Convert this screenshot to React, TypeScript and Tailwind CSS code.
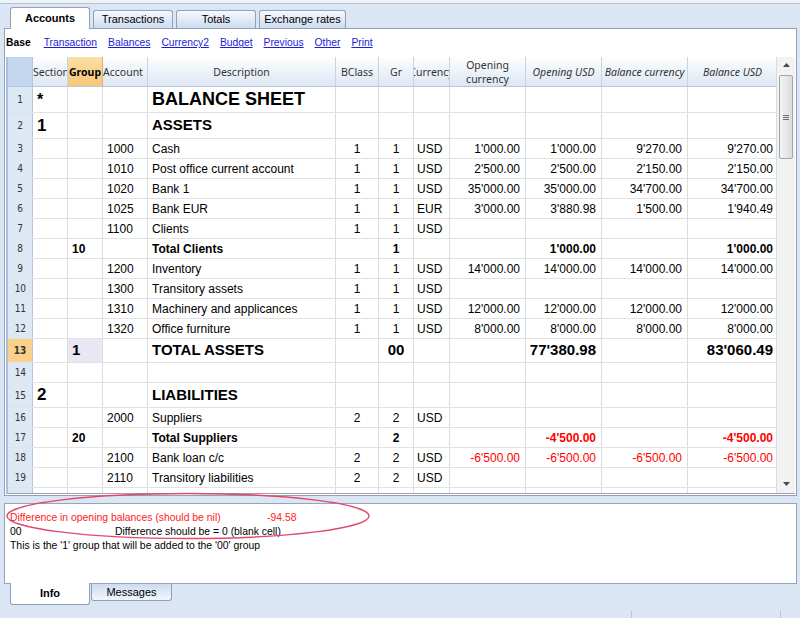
import React from "react";

type Row = {
  n: number;
  h?: string;
  kind?: "title" | "head" | "total" | "big";
  sec?: string;
  grp?: string;
  acc?: string;
  desc?: string;
  bc?: string;
  gr?: string;
  cur?: string;
  oc?: string;
  ou?: string;
  bcur?: string;
  bu?: string;
  red?: boolean;
  selected?: boolean;
  hideNum?: boolean;
};

const rows: Row[] = [
  { n: 1, h: "h-[26px]", kind: "title", sec: "*", desc: "BALANCE SHEET" },
  { n: 2, h: "h-[26px]", kind: "head", sec: "1", desc: "ASSETS" },
  { n: 3, acc: "1000", desc: "Cash", bc: "1", gr: "1", cur: "USD", oc: "1'000.00", ou: "1'000.00", bcur: "9'270.00", bu: "9'270.00" },
  { n: 4, acc: "1010", desc: "Post office current account", bc: "1", gr: "1", cur: "USD", oc: "2'500.00", ou: "2'500.00", bcur: "2'150.00", bu: "2'150.00" },
  { n: 5, acc: "1020", desc: "Bank 1", bc: "1", gr: "1", cur: "USD", oc: "35'000.00", ou: "35'000.00", bcur: "34'700.00", bu: "34'700.00" },
  { n: 6, acc: "1025", desc: "Bank EUR", bc: "1", gr: "1", cur: "EUR", oc: "3'000.00", ou: "3'880.98", bcur: "1'500.00", bu: "1'940.49" },
  { n: 7, acc: "1100", desc: "Clients", bc: "1", gr: "1", cur: "USD" },
  { n: 8, kind: "total", grp: "10", desc: "Total Clients", gr: "1", ou: "1'000.00", bu: "1'000.00" },
  { n: 9, acc: "1200", desc: "Inventory", bc: "1", gr: "1", cur: "USD", oc: "14'000.00", ou: "14'000.00", bcur: "14'000.00", bu: "14'000.00" },
  { n: 10, acc: "1300", desc: "Transitory assets", bc: "1", gr: "1", cur: "USD" },
  { n: 11, acc: "1310", desc: "Machinery and applicances", bc: "1", gr: "1", cur: "USD", oc: "12'000.00", ou: "12'000.00", bcur: "12'000.00", bu: "12'000.00" },
  { n: 12, acc: "1320", desc: "Office furniture", bc: "1", gr: "1", cur: "USD", oc: "8'000.00", ou: "8'000.00", bcur: "8'000.00", bu: "8'000.00" },
  { n: 13, h: "h-[24px]", kind: "big", grp: "1", desc: "TOTAL ASSETS", gr: "00", ou: "77'380.98", bu: "83'060.49", selected: true },
  { n: 14 },
  { n: 15, h: "h-[25px]", kind: "head", sec: "2", desc: "LIABILITIES" },
  { n: 16, acc: "2000", desc: "Suppliers", bc: "2", gr: "2", cur: "USD" },
  { n: 17, kind: "total", grp: "20", desc: "Total Suppliers", gr: "2", ou: "-4'500.00", bu: "-4'500.00", red: true },
  { n: 18, acc: "2100", desc: "Bank loan c/c", bc: "2", gr: "2", cur: "USD", oc: "-6'500.00", ou: "-6'500.00", bcur: "-6'500.00", bu: "-6'500.00", red: true },
  { n: 19, acc: "2110", desc: "Transitory liabilities", bc: "2", gr: "2", cur: "USD" },
  { n: 20, hideNum: true },
];

const cell = "shrink-0 border-r border-[#dcdcdc] overflow-hidden whitespace-nowrap flex items-center";

function GridRow({ r }: { r: Row }) {
  const h = r.h || "h-[20px]";
  // text weight/size per row kind
  const txt =
    r.kind === "title"
      ? "font-bold text-[18px]"
      : r.kind === "head" || r.kind === "big"
      ? "font-bold text-[15px]"
      : r.kind === "total"
      ? "font-bold text-[12px]"
      : "text-[12px]";
  const num = r.red ? "text-[#ff0000]" : "text-black";
  const secSize = r.kind === "title" ? "text-[16px] font-bold" : r.kind === "head" ? "text-[17px] font-bold" : "";

  return (
    <div className={`flex ${h} border-b border-[#e2e2e2] font-['Liberation_Sans',Arial,sans-serif] text-black`}>
      <div
        className={`${cell} w-[25px] justify-center text-[10px] font-['DejaVu_Sans',sans-serif] text-[#333] border-r-[#b3c6de] ${
          r.selected ? "bg-[#f9d18a] font-bold" : "bg-[#dde8f5]"
        }`}
      >
        {!r.hideNum && <span className="scale-x-90">{r.n}</span>}
      </div>
      <div className={`${cell} w-[35px] pl-[4px] ${secSize}`}>{r.sec}</div>
      <div className={`${cell} w-[35px] pl-[4px] ${txt} ${r.selected ? "bg-[#e8e8f5]" : ""}`}>{r.grp}</div>
      <div className={`${cell} w-[45px] pl-[4px] text-[12px]`}>{r.acc}</div>
      <div className={`${cell} w-[188px] pl-[4px] ${txt}`}>{r.desc}</div>
      <div className={`${cell} w-[43px] justify-center text-[12px]`}>{r.bc}</div>
      <div className={`${cell} w-[35px] justify-center ${txt}`}>{r.gr}</div>
      <div className={`${cell} w-[36px] pl-[3px] text-[12px]`}>{r.cur}</div>
      <div className={`${cell} w-[76px] justify-end pr-[5px] ${txt} ${num}`}>{r.oc}</div>
      <div className={`${cell} w-[76px] justify-end pr-[5px] ${txt} ${num}`}>{r.ou}</div>
      <div className={`${cell} w-[86px] justify-end pr-[5px] ${txt} ${num}`}>{r.bcur}</div>
      <div className={`${cell} w-[89px] justify-end pr-[4px] border-r-0 ${txt} ${num}`}>{r.bu}</div>
    </div>
  );
}

const hcell =
  "shrink-0 h-full border-r border-[#c6d3e3] overflow-hidden whitespace-nowrap flex items-center bg-gradient-to-b from-[#fdfeff] to-[#dde7f3]";

function Header() {
  return (
    <div className="flex h-[30px] border-b border-[#b7c8dd] font-['Noto_Sans',sans-serif] text-[10.5px] text-[#333] leading-[12px]">
      <div className="shrink-0 w-[25px] h-full bg-[#c4d7ef] border-r border-[#b3c6de]" />
      <div className={`${hcell} w-[35px]`}>Section</div>
      <div className="shrink-0 w-[35px] h-full border-r border-[#d9b36a] flex items-center justify-center font-bold text-black bg-gradient-to-b from-[#fbdfa6] to-[#f6c778]">
        Group
      </div>
      <div className={`${hcell} w-[45px]`}>Account</div>
      <div className={`${hcell} w-[188px] justify-center`}>Description</div>
      <div className={`${hcell} w-[43px] justify-center`}>BClass</div>
      <div className={`${hcell} w-[35px] justify-center`}>Gr</div>
      <div className={`${hcell} w-[36px] justify-center`}>Currency</div>
      <div className={`${hcell} w-[76px] flex-col justify-center text-center leading-[14px]`}>
        <span>Opening</span>
        <span>currency</span>
      </div>
      <div className={`${hcell} w-[76px] justify-center italic`}>Opening USD</div>
      <div className={`${hcell} w-[86px] justify-center italic`}>Balance currency</div>
      <div className={`${hcell} w-[89px] justify-center italic border-r-0`}>Balance USD</div>
    </div>
  );
}

function Scrollbar() {
  return (
    <div className="w-[19px] h-full shrink-0 bg-[#f2f2f2] border-l border-[#dadada] flex flex-col items-center justify-between py-[5px]">
      <div className="flex flex-col items-center">
        <svg width="7" height="4" viewBox="0 0 7 4" className="mt-[1px]">
          <path d="M0 4 L3.5 0 L7 4 Z" fill="#4a4a4a" />
        </svg>
        <div className="mt-[8px] w-[14px] h-[84px] rounded-[2px] border border-[#9ba6b4] bg-gradient-to-r from-[#f4f4f4] to-[#dcdcdc] flex items-center justify-center">
          <div className="flex flex-col gap-[1px]">
            <div className="w-[6px] h-px bg-[#6b6b6b]" />
            <div className="w-[6px] h-px bg-[#6b6b6b]" />
            <div className="w-[6px] h-px bg-[#6b6b6b]" />
          </div>
        </div>
      </div>
      <svg width="7" height="4" viewBox="0 0 7 4" className="mb-[2px]">
        <path d="M0 0 L7 0 L3.5 4 Z" fill="#4a4a4a" />
      </svg>
    </div>
  );
}

function TopTab({ label, w, active }: { label: string; w: string; active?: boolean }) {
  if (active)
    return (
      <div className={`relative z-10 -mb-px ${w} h-[22px] bg-white border border-b-0 border-[#8fa1ba] rounded-t-[3px] flex items-center justify-center font-bold text-[11px] text-black whitespace-nowrap`}>
        {label}
      </div>
    );
  return (
    <div className={`${w} h-[18px] border border-b-0 border-[#8fa1ba] rounded-t-[3px] bg-gradient-to-b from-[#f6f9fd] to-[#cddcf0] flex items-center justify-center text-[11px] text-black whitespace-nowrap`}>
      {label}
    </div>
  );
}

export default function App() {
  const links = ["Transaction", "Balances", "Currency2", "Budget", "Previous", "Other", "Print"];
  return (
    <div className="w-[800px] h-[618px] overflow-hidden bg-[#dbe6f4] font-['Noto_Sans',sans-serif]">
      {/* top strip */}
      <div className="h-[4px] bg-[#eef2f7] border-b border-[#b7c3d3]" />

      {/* main tabs */}
      <div className="h-[24px] flex items-end pl-[10px] gap-[3px] font-['Liberation_Sans',Arial,sans-serif]">
        <TopTab label="Accounts" w="w-[80px]" active />
        <TopTab label="Transactions" w="w-[80px]" />
        <TopTab label="Totals" w="w-[80px]" />
        <TopTab label="Exchange rates" w="w-[87px]" />
      </div>

      {/* main panel */}
      <div className="ml-[4px] w-[793px] bg-white border border-[#8fa1ba] pb-[1px]">
        <div className="h-[28px] flex items-center pl-[1px] gap-[11px] text-[10.3px] font-['Liberation_Sans',Arial,sans-serif]">
          <span className="font-bold text-black mr-[2px]">Base</span>
          {links.map((l) => (
            <span key={l} className="text-[#1c1cd6] underline">
              {l}
            </span>
          ))}
        </div>

        <div className="ml-[1px] w-[789px] h-[437px] flex border-l-2 border-b border-l-[#a9bfdc] border-b-[#a3a3a3] overflow-hidden">
          <div className="w-[769px] h-full overflow-hidden">
            <Header />
            {rows.map((r) => (
              <GridRow key={r.n} r={r} />
            ))}
          </div>
          <Scrollbar />
        </div>
      </div>

      {/* info panel */}
      <div className="relative mt-[7px] ml-[4px] w-[793px] h-[81px] bg-white border border-[#98a4b4] pt-[7px] pl-[5px] font-['Liberation_Sans',Arial,sans-serif] text-[10.4px] leading-[14px]">
        <div className="text-[#ff1a1a]">
          <span className="inline-block w-[257px]">Difference in opening balances (should be nil)</span>
          <span>-94.58</span>
        </div>
        <div className="text-black">
          <span className="inline-block w-[105px]">00</span>
          <span>Difference should be = 0 (blank cell)</span>
        </div>
        <div className="text-black">This is the '1' group that will be added to the '00' group</div>

        <svg className="absolute left-[-2px] top-[-12px] pointer-events-none" width="370" height="50" viewBox="0 0 370 50">
          <ellipse cx="185" cy="24" rx="181" ry="22.5" fill="none" stroke="#e2496b" strokeWidth="1.4" />
        </svg>
      </div>

      {/* bottom tabs */}
      <div className="flex items-start pl-[10px] gap-[1px] font-['Liberation_Sans',Arial,sans-serif]">
        <div className="relative -mt-px w-[80px] h-[22px] bg-white border border-t-0 border-[#8fa1ba] rounded-b-[3px] flex items-center justify-center font-bold text-[11px] text-black">
          Info
        </div>
        <div className="w-[81px] h-[17px] border border-t-0 border-[#8fa1ba] rounded-b-[3px] bg-gradient-to-b from-[#cddcf0] to-[#f2f6fc] flex items-center justify-center text-[11px] text-black">
          Messages
        </div>
      </div>

      {/* status separators */}
      <div className="flex h-[8px] mt-[6px]">
        <div className="w-[632px] border-r border-[#b8c4d4]" />
        <div className="w-[149px] border-r border-[#b8c4d4]" />
      </div>
    </div>
  );
}
